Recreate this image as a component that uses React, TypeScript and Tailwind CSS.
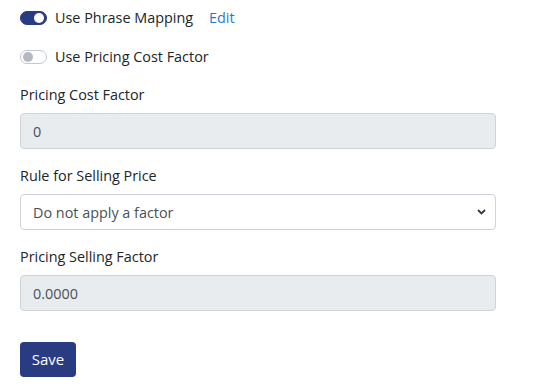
import { useState } from "react";

function Toggle({ on }: { on: boolean }) {
  return on ? (
    <span className="relative inline-block w-[27px] h-[14px] rounded-full bg-[#293b82] border border-[#293b82]">
      <span className="absolute right-[2px] top-[1px] w-[10px] h-[10px] rounded-full bg-white" />
    </span>
  ) : (
    <span className="relative inline-block w-[27px] h-[14px] rounded-full bg-white border border-[#c3c8ce]">
      <span className="absolute left-[2px] top-[1px] w-[10px] h-[10px] rounded-full bg-[#b4bac0]" />
    </span>
  );
}

export default function App() {
  const [rule, setRule] = useState("none");

  return (
    <div className="w-[551px] h-[391px] bg-white px-5 pt-[7px] font-['Open_Sans',sans-serif] text-[14.4px] leading-[21px] text-[#212529]">
      {/* switches */}
      <div className="flex items-center h-[21px]">
        <Toggle on={true} />
        <span className="ml-[8px]">Use Phrase Mapping</span>
        <a className="ml-[16px] text-[#1f7bd3]">Edit</a>
      </div>
      <div className="flex items-center h-[21px] mt-[18px]">
        <Toggle on={false} />
        <span className="ml-[8px]">Use Pricing Cost Factor</span>
      </div>

      {/* fields */}
      <div className="mt-[17px] w-[476px]">
        <label className="block mb-2">Pricing Cost Factor</label>
        <input
          disabled
          value="0"
          className="block w-full h-[36px] px-3 rounded-[4px] border border-[#ced4da] bg-[#e9ecef] text-[#495057]"
        />
      </div>

      <div className="mt-4 w-[476px]">
        <label className="block mb-2">Rule for Selling Price</label>
        <div className="relative">
          <select
            value={rule}
            onChange={(e) => setRule(e.target.value)}
            className="block w-full h-[36px] pl-3 pr-8 rounded-[4px] border border-[#ced4da] bg-white text-[#495057] appearance-none"
          >
            <option value="none">Do not apply a factor</option>
          </select>
          <svg
            className="absolute right-[10px] top-[15px] pointer-events-none"
            width="9"
            height="6"
            viewBox="0 0 9 6"
          >
            <path d="M1 1l3.5 3.5L8 1" fill="none" stroke="#343a40" strokeWidth="1.8" />
          </svg>
        </div>
      </div>

      <div className="mt-4 w-[476px]">
        <label className="block mb-2">Pricing Selling Factor</label>
        <input
          disabled
          value="0.0000"
          className="block w-full h-[36px] px-3 rounded-[4px] border border-[#ced4da] bg-[#e9ecef] text-[#495057]"
        />
      </div>

      <button className="mt-[31px] h-[35px] w-[56px] rounded-[4px] bg-[#293b82] text-white text-[15px]">
        Save
      </button>
    </div>
  );
}
